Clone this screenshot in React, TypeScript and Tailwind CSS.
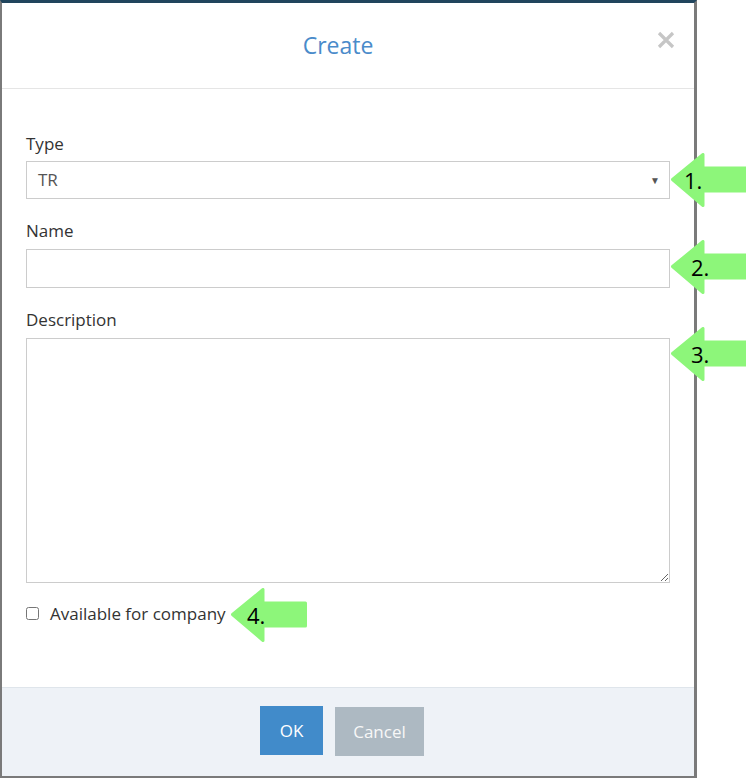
import React from "react";

const font = { fontFamily: '"Open Sans", "Noto Sans", sans-serif' };

function Arrow({
  top,
  left,
  label,
  textLeft
}: {
  top: number;
  left: number;
  label: string;
  textLeft: number;
}): React.ReactNode {
  return (
    <div className="absolute w-[76px] h-[54px]" style={{ top, left }}>
      <svg width="76" height="54" viewBox="0 0 76 54" className="absolute inset-0">
        <polygon
          points="1.5,26.5 32,1.5 32,15 74.5,15 74.5,38 32,38 32,52.5"
          fill="#8df67a"
          stroke="#8df67a"
          strokeWidth="3"
          strokeLinejoin="round"
        />
      </svg>
      <span
        className="absolute top-0 h-[54px] flex items-center text-[22px] leading-none text-black"
        style={{ left: textLeft }}>
        {label}
      </span>
    </div>
  );
}

export default function App(): React.ReactNode {
  return (
    <div className="relative w-[746px] h-[778px] bg-white overflow-hidden" style={font}>
      <div className="w-[697px] h-[778px] flex flex-col border-t-[3px] border-t-[#21455d] border-l-2 border-r-[3px] border-b-2 border-l-[#7a7a7a] border-r-[#7a7a7a] border-b-[#7a7a7a] bg-white">
        <div className="relative h-[86px] shrink-0 flex items-center justify-center pr-[20px] border-b border-[#e5e5e5]">
          <h1 className="text-[23px] text-[#4a8bca] font-normal">Create</h1>
          <svg
            width="18"
            height="18"
            viewBox="0 0 18 18"
            className="absolute right-[19px] top-[28px]">
            <path d="M2 2 L16 16 M16 2 L2 16" stroke="#c6c6c6" strokeWidth="3.2" />
          </svg>
        </div>

        <div className="flex-1 px-6 pt-[44px] text-[17px] text-[#333]">
          <label className="block leading-[21px] mb-[7px]">Type</label>
          <div className="h-[38px] border border-[#cccccc] flex items-center justify-between pl-[11px] pr-[9px] text-[#555]">
            <span>TR</span>
            <span className="text-[10px] text-[#555]">▼</span>
          </div>

          <label className="block leading-[21px] mt-[21px] mb-[8px]">Name</label>
          <input
            type="text"
            className="block w-full h-[39px] border border-[#cccccc] px-[11px] outline-none"
          />

          <label className="block leading-[21px] mt-[21px] mb-[8px]">Description</label>
          <textarea className="block w-full h-[245px] border border-[#cccccc] px-[11px] py-2 outline-none resize-y" />

          <div className="flex items-center gap-[11px] mt-[20px] leading-[21px]">
            <input type="checkbox" className="w-[13px] h-[13px] m-0" />
            <span>Available for company</span>
          </div>
        </div>

        <div className="h-[89px] shrink-0 border-t border-[#dfe5eb] bg-[#eef2f7] flex justify-center items-start pt-[18px] pr-[12px] gap-[12px]">
          <button className="w-[63px] h-[49px] bg-[#418bca] text-white text-[17px]">OK</button>
          <button className="w-[89px] h-[49px] mt-px bg-[#adb9c2] text-[#f7f7f7] text-[17px]">
            Cancel
          </button>
        </div>
      </div>

      <Arrow top={153} left={671} label="1." textLeft={13} />
      <Arrow top={240} left={671} label="2." textLeft={20} />
      <Arrow top={327} left={671} label="3." textLeft={20} />
      <Arrow top={588} left={231} label="4." textLeft={16} />
    </div>
  );
}
